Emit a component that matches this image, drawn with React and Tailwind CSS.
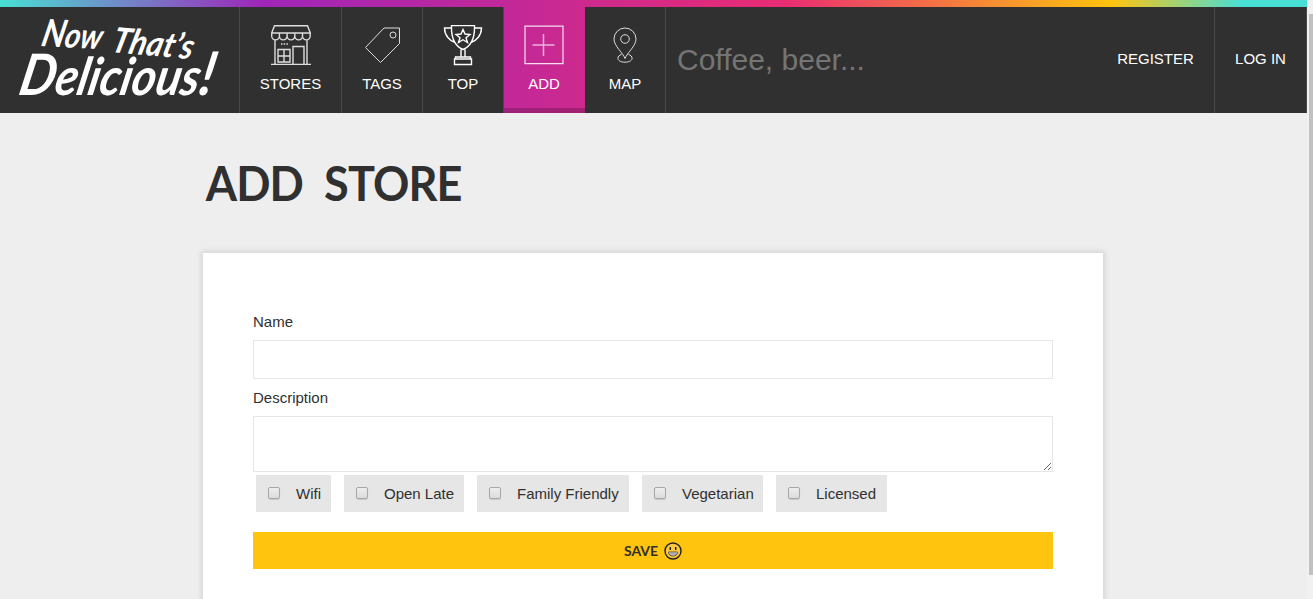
import React from 'react';

function Logo() {
  return (
    <svg className="block h-[105px] w-[239px] overflow-visible" viewBox="0 0 239 105" fill="#fff" fontFamily="Lato, sans-serif" fontStyle="italic" fontWeight="700">
      <text transform="translate(40 39) rotate(3) skewX(-10)" fontSize="35" textLength="60" lengthAdjust="spacingAndGlyphs"><tspan fontSize="38">N</tspan>ow</text>
      <text transform="translate(110 45) rotate(5) skewX(-10)" fontSize="35" textLength="81" lengthAdjust="spacingAndGlyphs">That’s</text>
      <text transform="translate(17 88) skewX(-12)" fontSize="52" textLength="194" lengthAdjust="spacingAndGlyphs"><tspan fontSize="57">D</tspan>elicious<tspan fontSize="60">!</tspan></text>
    </svg>
  );
}

function Icon({ name }) {
  return (
    <svg className="block h-[41px] w-10" viewBox="0 0 40 41" fill="none" stroke="#fff" strokeWidth="1.4">
      {name === 'STORES' && (
        <g stroke="#ddd">
          <path d="M3.5 .7H36.5L39.3 8H.7ZM.7 8V11a3.8 3.8 0 0 0 7.7 0a3.8 3.8 0 0 0 7.7 0a3.8 3.8 0 0 0 7.7 0a3.8 3.8 0 0 0 7.7 0a3.8 3.8 0 0 0 7.7 0V8M8.4 8v4M16.1 8v4M23.8 8v4M31.5 8v4M4 15V39M36 15V39M0 39.4H40M22 39V21.5H33V39M7 24.5H19V37H7ZM13 24.5V37M7 31H19" />
          <path d="M10 19H17" strokeDasharray="1.5 1.2" />
        </g>
      )}
      {name === 'TAGS' && (
        <g stroke="#ddd" strokeWidth="1" transform="translate(0 -.5)">
          <path d="M22 3.5H37.5V19L18.5 38L3.5 23Z" />
          <circle cx="31" cy="10.5" r="3" />
        </g>
      )}
      {name === 'TOP' && (
        <g transform="translate(0 -.5)">
          <path d="M8.5 1H31.5C32 15 27 22 20 25C13 22 8 15 8.5 1ZM8 3.5H1.5C1.5 11 7 16.5 12 18M32 3.5H38.5C38.5 11 33 16.5 28 18M18 25V33M22 25V33M12.5 34.5V32.5H27.5V34.5M11.5 34.5H28.5V40H11.5Z" />
          <path d="M20 5L22 9.5L27 10L23 13.2L24.5 18L20 15.2L15.5 18L17 13.2L13 10L18 9.5Z" />
        </g>
      )}
      {name === 'ADD' && (
        <g>
          <path d="M1 1.2H39V38.7H1Z" strokeWidth="1.2" strokeOpacity=".85" />
          <path d="M19.5 9V31M8.5 20H30.5" strokeWidth="1.5" strokeOpacity=".65" />
        </g>
      )}
      {name === 'MAP' && (
        <g stroke="#ddd" strokeWidth="1">
          <path d="M20 33.5C18 28 9 21 9 14A11 11 0 0 1 31 14C31 21 22 28 20 33.5ZM16.5 29.5C11 31 11.5 37.2 20 37.2S29 31 23.5 29.5" />
          <circle cx="20" cy="14" r="4.3" />
        </g>
      )}
    </svg>
  );
}

function NavItem({ name, width, active }) {
  return (
    <a className={`flex h-[106px] flex-col items-center pt-[18px] text-white ${width} ${active ? 'border-b-[5px] border-black/20 pr-px' : 'border-r border-[#484848] bg-[#303030]'}`}>
      <Icon name={name} />
      <span className="mt-2 text-[15px] leading-5">{name}</span>
    </a>
  );
}

function Tag({ label, width }) {
  return (
    <label className={`flex h-[37px] items-center bg-[#e6e6e6] pl-3 ${width}`}>
      <input type="checkbox" className="mr-4 mb-px h-3 w-3 appearance-none rounded-[2px] border border-[#a8a8a8] bg-linear-to-b from-[#ededed] to-[#dcdcdc] shadow-[0_1px_1px_#c8c8c8]" />
      <span className="whitespace-nowrap pt-px">{label}</span>
    </label>
  );
}

export default function App() {
  return (
    <div className="flex h-[599px] w-[1313px] overflow-hidden bg-[#eeeeee] font-['Liberation_Sans',Arial,sans-serif] text-[15px] text-[#303030]">
      <div className="w-[1307px] shrink-0">
        <header className="flex h-[113px] bg-[linear-gradient(90deg,#48e0d4_0%,#9f25b9_20%,#e92c73_60%,#ffc40d_85%,#48e0d4_95%)] pt-[7px]">
          <div className="w-[240px] border-r border-[#484848] bg-[#303030]"><Logo /></div>
          <NavItem name="STORES" width="w-[102px]" />
          <NavItem name="TAGS" width="w-[81px]" />
          <NavItem name="TOP" width="w-[81px]" />
          <NavItem name="ADD" width="w-[81px]" active />
          <NavItem name="MAP" width="w-[81px]" />
          <div className="flex flex-1 items-center bg-[#303030] pb-px pl-[11px]">
            <input placeholder="Coffee, beer..." className="w-[400px] bg-transparent text-[30px] outline-none placeholder:text-[#757575]" />
          </div>
          <a className="flex w-[118px] items-center justify-center border-r border-[#484848] bg-[#303030] pb-px text-white">REGISTER</a>
          <a className="flex w-[92px] items-center justify-center border-r border-[#484848] bg-[#303030] pb-px text-white">LOG IN</a>
        </header>
        <main className="ml-[203px] w-[900px]">
          <h1 className="h-[140px] origin-left scale-x-[0.93] pl-[3px] pt-[39px] font-['Lato',sans-serif] text-[48.5px] font-bold leading-[60px] tracking-[-1px] [word-spacing:12px]">
            ADD STORE
          </h1>
          <form className="h-[430px] bg-white px-[50px] pt-[60px] shadow-[0_0_5px_2px_rgba(0,0,0,0.1)]">
            <label className="block h-[27px] leading-[18px]">Name</label>
            <input className="block h-[39px] w-full border border-[#e6e6e6]" />
            <label className="mt-[10px] block h-[27px] leading-[18px]">Description</label>
            <textarea className="block h-[56px] w-full resize-y border border-[#e6e6e6]" />
            <div className="mt-[3px] flex gap-[13px] pl-[3px]">
              <Tag label="Wifi" width="w-[75px]" />
              <Tag label="Open Late" width="w-[120px]" />
              <Tag label="Family Friendly" width="w-[152px]" />
              <Tag label="Vegetarian" width="w-[121px]" />
              <Tag label="Licensed" width="w-[111px]" />
            </div>
            <button type="button" className="mt-5 flex h-[37px] w-full items-center justify-center gap-[6px] bg-[#ffc40d] font-['Lato',sans-serif] text-[14px] font-bold">
              SAVE
              <svg className="h-[18px] w-[18px]" viewBox="0 0 18 18" fill="none" stroke="#222">
                <circle cx="9" cy="9" r="8" fill="#ffc83d" strokeWidth="1.4" />
                <path d="M4.5 10H13.5C13.5 15.5 4.5 15.5 4.5 10Z" fill="#fff" strokeWidth=".7" />
                <path d="M4.8 12H13.2M7 10V14M9 10V14M11 10V14" strokeWidth=".4" />
                <path d="M6.3 5V8M11.7 5V8" strokeWidth="1.5" />
              </svg>
            </button>
          </form>
        </main>
      </div>
      <div className="w-[6px] bg-[#f1f1f1] pl-[2px] pt-[14px]">
        <div className="h-[561px] bg-[#c1c1c1]" />
      </div>
    </div>
  );
}
